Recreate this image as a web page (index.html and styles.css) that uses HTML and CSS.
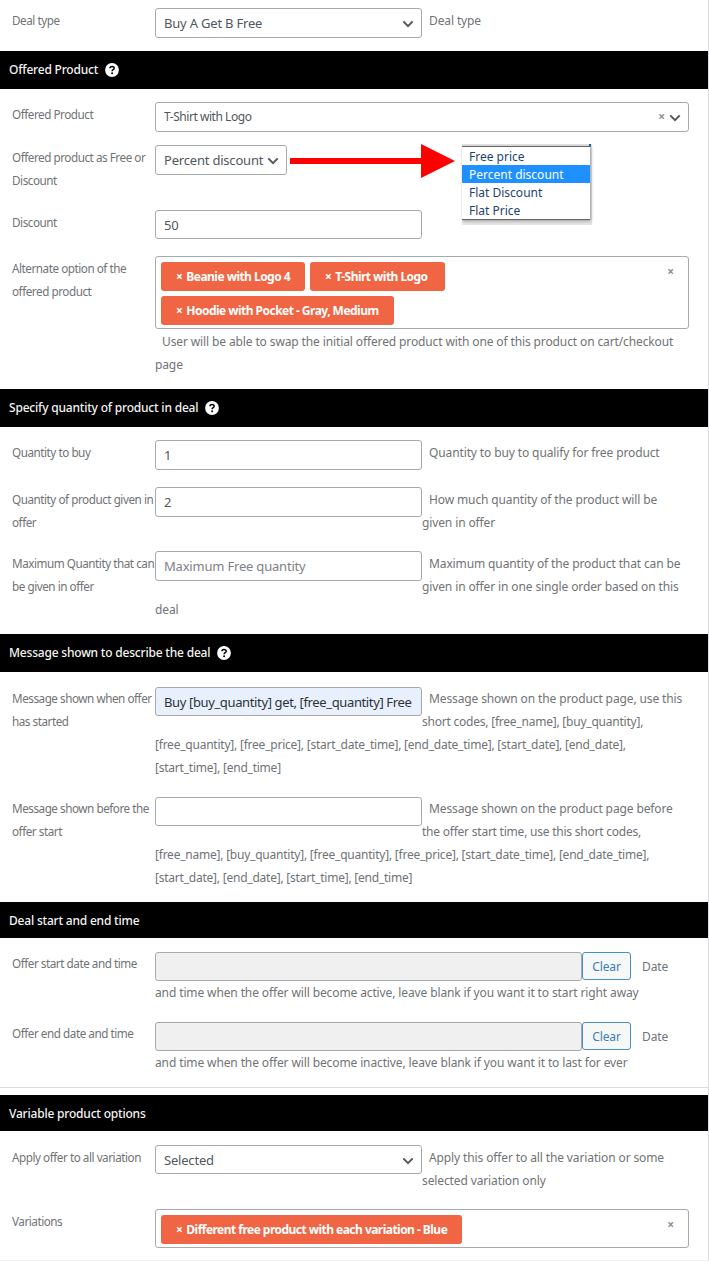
FILE: index.html
```html
<!DOCTYPE html>
<html lang="en">
<head>
<meta charset="utf-8">
<title>Deal settings</title>
<link rel="stylesheet" href="styles.css">
</head>
<body>
<svg class="defs" width="0" height="0">
  <symbol id="chev" viewBox="0 0 12 8"><path d="M1.3 1.400 6 6.100l4.700-4.700" fill="none" stroke="#50575e" stroke-width="2"/></symbol>
  <symbol id="help" viewBox="0 0 14 14"><circle cx="7" cy="7" r="6.900" fill="#fff"/><path d="M4.900 5.300C5 3.900 5.900 3.400 7 3.400c1.300 0 2.200.7 2.200 1.800C9.200 6.700 7.100 6.600 7.100 8.300" fill="none" stroke="#000" stroke-width="1.500"/><circle cx="7.100" cy="10.300" r="1" fill="#000"/></symbol>
</svg>
<main class="panel">
  <section class="group first low">
    <div class="row r-deal"><label class="label">Deal type</label>
      <div class="field"><div class="input select"><span>Buy A Get B Free</span><svg class="chev"><use href="#chev"/></svg></div>
        <p class="help ind">Deal type</p></div></div>
  </section>

  <h2 class="bar b1"><span>Offered Product</span><svg class="tip"><use href="#help"/></svg></h2>
  <section class="group g1 low">
    <div class="row r43"><label class="label">Offered Product</label>
      <div class="field"><div class="input select wide"><span class="small">T-Shirt with Logo</span><i class="x">×</i><svg class="chev"><use href="#chev"/></svg></div></div></div>
    <div class="row r65"><label class="label">Offered product as Free or<br>Discount</label>
      <div class="field"><div class="input select narrow"><span>Percent discount</span><svg class="chev"><use href="#chev"/></svg></div>
        <svg class="arrow" width="166" height="34" viewBox="0 0 166 34"><path d="M0 14h131V0l34 17-34 17V20H0z" fill="#f00"/></svg>
        <div class="menu"><b class="nib"></b><ul><li>Free price</li><li class="on">Percent discount</li><li>Flat Discount</li><li>Flat Price</li></ul></div>
      </div></div>
    <div class="row r46"><label class="label">Discount</label>
      <div class="field"><div class="input short"><span>50</span></div></div></div>
    <div class="row r133"><label class="label">Alternate option of the<br>offered product</label>
      <div class="field"><div class="tags tall"><div class="list"><b class="tag t1"><i>×</i>Beanie with Logo 4</b><b class="tag t2"><i>×</i>T-Shirt with Logo</b><b class="tag t3"><i>×</i>Hoodie with Pocket - Gray, Medium</b></div><i class="x">×</i></div>
        <p class="help ind">User will be able to swap the initial offered product with one of this product on cart/checkout<br>page</p></div></div>
  </section>

  <h2 class="bar b2"><span>Specify quantity of product in deal</span><svg class="tip"><use href="#help"/></svg></h2>
  <section class="group g2 low">
    <div class="row r47"><label class="label">Quantity to buy</label>
      <div class="field"><div class="input"><span>1</span></div><p class="help ind">Quantity to buy to qualify for free product</p></div></div>
    <div class="row r64"><label class="label">Quantity of product given in<br>offer</label>
      <div class="field"><div class="input"><span>2</span></div><p class="help ind">How much quantity of the product will be<br>given in offer</p></div></div>
    <div class="row r83"><label class="label">Maximum Quantity that can<br>be given in offer</label>
      <div class="field"><div class="input"><span class="ph">Maximum Free quantity</span></div><p class="help ind">Maximum quantity of the product that can be<br>given in offer in one single order based on this<br>deal</p></div></div>
  </section>

  <h2 class="bar b3"><span>Message shown to describe the deal</span><svg class="tip"><use href="#help"/></svg></h2>
  <section class="group g3">
    <div class="row r110"><label class="label">Message shown when offer<br>has started</label>
      <div class="field"><div class="input short filled"><span>Buy [buy_quantity] get, [free_quantity] Free</span></div><p class="help ind">Message shown on the product page, use this<br><span class="codes">short codes, [free_name], [buy_quantity],<br>[free_quantity], [free_price], [start_date_time], [end_date_time], [start_date], [end_date],<br>[start_time], [end_time]</span></p></div></div>
    <div class="row r105"><label class="label">Message shown before the<br>offer start</label>
      <div class="field"><div class="input short"></div><p class="help ind">Message shown on the product page before<br><span class="codes">the offer start time, use this short codes,<br>[free_name], [buy_quantity], [free_quantity], [free_price], [start_date_time], [end_date_time],<br>[start_date], [end_date], [start_time], [end_time]</span></p></div></div>
  </section>

  <h2 class="bar b4"><span>Deal start and end time</span></h2>
  <section class="group g4">
    <div class="row r70"><label class="label">Offer start date and time</label>
      <div class="field"><div class="when"><div class="input short off"></div><button class="clear">Clear</button><span class="help">Date</span></div><p class="help">and time when the offer will become active, leave blank if you want it to start right away</p></div></div>
    <div class="row r65"><label class="label">Offer end date and time</label>
      <div class="field"><div class="when"><div class="input short off"></div><button class="clear">Clear</button><span class="help">Date</span></div><p class="help">and time when the offer will become inactive, leave blank if you want it to last for ever</p></div></div>
  </section>

  <h2 class="bar b5"><span>Variable product options</span></h2>
  <section class="group g5 low">
    <div class="row r64"><label class="label">Apply offer to all variation</label>
      <div class="field"><div class="input select short"><span>Selected</span><svg class="chev"><use href="#chev"/></svg></div><p class="help ind">Apply this offer to all the variation or some<br>selected variation only</p></div></div>
    <div class="row r51"><label class="label">Variations</label>
      <div class="field"><div class="tags"><div class="list"><b class="tag t4"><i>×</i>Different free product with each variation - Blue</b></div><i class="x">×</i></div></div></div>
  </section>
</main>
</body>
</html>
```
FILE: styles.css
```css
* { box-sizing: border-box; margin: 0; padding: 0; }
body { background: #fff; font-family: "Noto Sans", "Open Sans", sans-serif; color: #707376; overflow: hidden; }
.defs { display: none; }
i { font-style: normal; }
.panel { width: 709px; height: 1261px; border-right: 1px solid #dcdcde; border-bottom: 1px solid #eee; overflow: hidden; }

.bar { display: flex; align-items: center; gap: 7px; padding: 0 0 1px 9px; background: #000; color: #f3f3f3; font-size: 12px; font-weight: 500; letter-spacing: -0.2px; white-space: nowrap; }
.tip { width: 14px; height: 14px; }
.b1, .b2, .b3 { height: 38px; }
.b4, .b5 { height: 36px; padding-bottom: 0; }

.first { height: 51px; padding-top: 8px; }
.g1 { height: 300px; padding-top: 13px; }
.g2 { height: 207px; padding-top: 13px; }
.g3 { height: 230px; padding-top: 15px; }
.g4 { height: 150px; padding-top: 14px; border-bottom: 1px solid #dcdcde; margin-bottom: 7px; }
.g5 { height: 130px; padding-top: 14px; }

.row { display: grid; grid-template-columns: 143px 1fr; padding-left: 12px; }
.r43 { height: 43px; } .r46 { height: 46px; } .r47 { height: 47px; } .r51 { height: 51px; }
.r64 { height: 64px; } .r65 { height: 65px; } .r70 { height: 70px; } .r83 { height: 83px; }
.r105 { height: 105px; } .r110 { height: 110px; } .r133 { height: 133px; }

.label, .help { font-size: 12px; line-height: 23px; white-space: nowrap; }
.help { letter-spacing: -0.12px; }
.label { font-size: 11.7px; letter-spacing: -0.46px; }
.low .label, .low .help { padding-top: 1px; }
.codes { letter-spacing: -0.225px; }
.ind { text-indent: 7px; }
.field { position: relative; min-width: 0; }

.input { float: left; display: flex; align-items: center; width: 267px; height: 30px; padding: 0 8px; border: 1px solid #a7aaad; border-radius: 3px; background: #fff; color: #50575e; font-size: 13px; letter-spacing: -0.2px; white-space: nowrap; overflow: hidden; }
.input.short { height: 29px; }
.input.filled { background: #e8f0fe; color: #2c3338; letter-spacing: -0.37px; }
.input span { overflow: hidden; flex: 1; }
.input .ph { color: #7d8186; }
.input .small { font-size: 12px; letter-spacing: -0.45px; padding-bottom: 1px; }
.input.wide { width: 534px; }
.input.narrow { width: 132px; }
.select { padding-right: 7px; }
.chev { width: 12px; height: 8px; flex: none; position: relative; top: 1px; }
.x { color: #8c8f94; font-size: 12px; font-weight: 700; margin-right: 4px; }
.input .x { padding-bottom: 2px; }

.arrow { position: absolute; left: 135px; top: -1px; }
.menu { position: absolute; left: 307px; top: -1px; width: 130px; padding: 2px 2px 5px 0; background: #e4e4e4; font-size: 12px; }
.menu ul { position: relative; list-style: none; background: #fff; border-top: 1px solid #666; border-bottom: 1px solid #666; box-shadow: 1px 1px 3px #999; color: #1c4470; }
.menu li { height: 18px; line-height: 20px; padding-left: 7px; }
.menu .on { background: #1e90ff; color: #fff; }
.nib { position: absolute; right: 1px; top: 0; width: 2px; height: 3px; background: #135e96; }

.tags { display: flex; justify-content: space-between; width: 534px; height: 39px; padding: 5px; border: 1px solid #a7aaad; border-radius: 3px; }
.tags.tall { height: 73px; }
.tags .x { margin-right: 9px; line-height: 20px; }
.list { display: flex; flex-wrap: wrap; align-content: flex-start; gap: 5px; width: 400px; }
.tag { display: flex; gap: 4px; height: 29px; padding-left: 15px; line-height: 29px; border-radius: 3px; background: #f06543; color: #fff; font-size: 12px; letter-spacing: -0.53px; white-space: nowrap; }
.t1 { width: 144px; } .t2 { width: 135px; } .t3 { width: 233px; } .t4 { width: 301px; }

.when { display: flex; height: 29px; }
.when .input { width: 427px; }
.off { background: #f0f0f0; }
.clear { width: 49px; height: 28px; border: 1px solid #4a8fc4; border-radius: 3px; background: #f6f7f7; color: #3b7fb5; font: 12px "Noto Sans", sans-serif; letter-spacing: -0.1px; }
.when .help { margin-left: 11px; line-height: 30px; }
```
